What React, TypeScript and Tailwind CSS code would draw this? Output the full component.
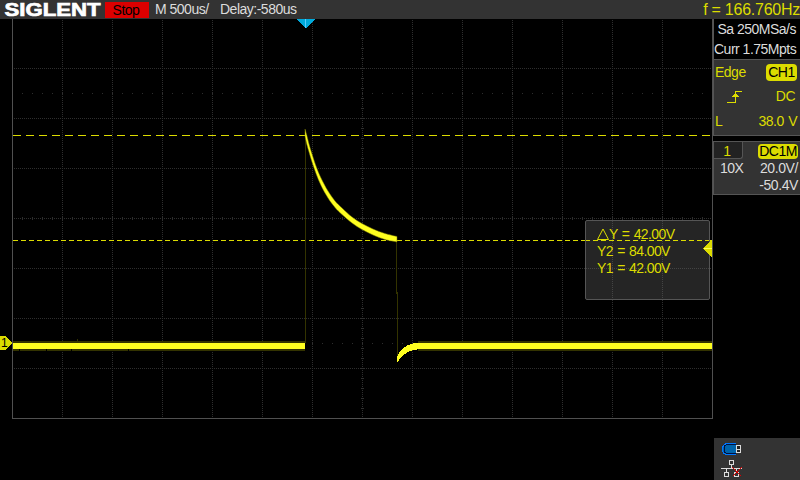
import React from "react";

const FONT = "font-['Liberation_Sans',Arial,sans-serif]";

const range = (n: number) => Array.from({ length: n }, (_, i) => i);

type Edge = [number, number, number];

// x, top and bottom edge of the bright decay trace
const decay: Edge[] = [
  [305, 129, 136], [307, 136, 145], [309, 144, 152], [312, 154, 162], [316, 166, 173.5],
  [321, 178, 185.5], [328, 191, 198], [335, 201, 207.5], [342, 208, 214.5], [352, 217, 223],
  [362, 223.5, 229.5], [373, 229, 235], [385, 233.5, 239.5], [397, 236.5, 242],
];
const recovery: Edge[] = [
  [397, 357, 363], [399, 353, 360], [401, 350.5, 357], [404, 347.5, 354.5], [408, 345, 352],
  [413, 343.5, 350], [420, 343, 349], [712, 343, 349],
];

// Catmull-Rom spline through the points
const curve = (p: [number, number][]) =>
  p.slice(1).map(([x, y], i) => {
    const a = p[i];
    const before = p[i - 1] ?? a;
    const after = p[i + 2] ?? [x, y];
    return `C${a[0] + (x - before[0]) / 6},${a[1] + (y - before[1]) / 6} ${x - (after[0] - a[0]) / 6},${y - (after[1] - a[1]) / 6} ${x},${y}`;
  }).join("");

const smoothBand = (pts: Edge[]) => {
  const top = pts.map(([x, t]): [number, number] => [x, t]);
  const bottom = pts.map(([x, , b]): [number, number] => [x, b]).reverse();
  return `M${top[0].join()}${curve(top)}L${bottom[0].join()}${curve(bottom)}Z`;
};

const band = (pts: Edge[]) =>
  [...pts.map(([x, t]) => `${x},${t}`), ...pts.slice().reverse().map(([x, , b]) => `${x},${b}`)].join(" ");

function Plot() {
  return (
    <svg className="block h-[461px] w-[713px] shrink-0" viewBox="0 19 713 461" shapeRendering="crispEdges">
      <g stroke="#2e2e2e" strokeDasharray="1 1">
        {range(13).map((i) => (
          <line key={i} x1={62.5 + 50 * i} x2={62.5 + 50 * i} y1="20" y2="418" />
        ))}
        {range(7).map((i) => (
          <line key={i} x1="14" x2="712" y1={68.5 + 50 * i} y2={68.5 + 50 * i} />
        ))}
      </g>
      <g fill="#2e2e2e">
        {range(69).map((i) => (
          <g key={i}>
            <rect x={22 + 10 * i} y="93" width="1" height="1" />
            <rect x={22 + 10 * i} y="343" width="1" height="1" />
            <rect x={22 + 10 * i} y="217" width="1" height="3" />
          </g>
        ))}
        {range(39).map((i) => (
          <rect key={i} x="361" y={28 + 10 * i} width="3" height="1" />
        ))}
      </g>
      <path d="M12.5 19V418.5H712.5V19" fill="none" stroke="#505050" />
      <path d="M13 135.5H712" stroke="#dcdc00" strokeDasharray="8 5" />
      <path d="M13 240.5H712" stroke="#dcdc00" strokeDasharray="5 3" />
      <path d="M305.5 130V343M396.5 240V294M397.5 292V360" stroke="#333300" fill="none" />
      <path d="M13 341H305V351H13ZM418 341H712V351H418Z" fill="#333300" />
      <path d={smoothBand(decay)} fill="#ffff20" stroke="#777700" strokeWidth="0.5" shapeRendering="auto" />
      <polygon points={band(recovery)} fill="#ffff20" />
      <rect x="13" y="343" width="292" height="6" fill="#ffff20" />
      <path d="M77 339h1v2h-1z" fill="#333300" />
      <path d="M19 349h1v2h-1zM46 349h1v2h-1zM71 349h1v2h-1zM128 349h1v2h-1z" fill="#000" />
      <path d="M296 19H315L306 28H305Z" fill="#00aadc" />
      <path d="M305.5 19V28" stroke="#55ccff" />
    </svg>
  );
}

function ChannelMarker() {
  return (
    <div className="absolute left-0 top-[336px] h-[14px] w-3">
      <svg className="absolute inset-0" width="12" height="14" shapeRendering="crispEdges">
        <path d="M0 0H6L12 7L6 14H0Z" fill="#dcdc00" />
      </svg>
      <span className="absolute left-px top-0 text-[12px] leading-[14px] text-black">1</span>
    </div>
  );
}

function CursorReadout() {
  return (
    <div className="absolute left-[585px] top-[220px] h-[80px] w-[125px] rounded-[2px] border border-[#555] bg-[#252525]">
      <svg className="absolute inset-0" width="123" height="78" shapeRendering="crispEdges">
        <g stroke="#444" strokeDasharray="1 1">
          <path d="M26.5 0V78M76.5 0V78M0 47.5H123" />
        </g>
        <path d="M-1 19.5H123" stroke="#dcdc00" strokeDasharray="5 3" />
      </svg>
      <div className="relative pl-[11px] pt-[5px] text-[14px] leading-[17px] tracking-[-0.6px] [word-spacing:1px] text-[#dcdc00]">
        <div className="flex items-center">
          <svg width="12" height="17" className="shrink-0">
            <path d="M0.5 13.5H11.5L6 3Z" fill="none" stroke="#dcdc00" />
          </svg>
          Y = 42.00V
        </div>
        <div>Y2 = 84.00V</div>
        <div>Y1 = 42.00V</div>
      </div>
    </div>
  );
}

function Sidebar() {
  return (
    <aside className="flex w-[87px] flex-col text-[14px] tracking-[-0.5px] text-[#dcdcdc]">
      <div className="h-[40px] border-l border-[#555] pr-1 text-right leading-[20px]">
        <div>Sa 250MSa/s</div>
        <div className="whitespace-nowrap">Curr 1.75Mpts</div>
      </div>
      <section className="h-[77px] border-y border-l border-[#555] bg-[#333] pl-px pr-[3px] text-[#dcdc00]">
        <div className="flex h-[24px] items-center justify-between">
          <span>Edge</span>
          <span className="h-[17px] w-[31px] rounded-[4px] bg-[#dcdc00] text-center leading-[17px] text-black">CH1</span>
        </div>
        <div className="flex h-[25px] items-center justify-between pl-[12px] pr-[2px]">
          <svg width="16" height="14" shapeRendering="crispEdges">
            <path d="M0 12.5H8.5V1.5H15" fill="none" stroke="#dcdc00" />
            <path d="M4 7H13L8.5 3Z" fill="#dcdc00" />
          </svg>
          <span>DC</span>
        </div>
        <div className="flex h-[25px] items-center justify-between">
          <span>L</span>
          <span className="[word-spacing:1px]">38.0 V</span>
        </div>
      </section>
      <section className="mt-[5px] h-[54px] border-b border-l border-[#555] bg-[#333]">
        <div className="flex h-[19px] justify-between border-t border-[#555]">
          <span className="h-[17px] w-[29px] rounded-br-[3px] border-b border-r border-[#555] bg-[#222] pr-[2px] text-center leading-[19px] text-[#dcdc00]">1</span>
          <span className="mr-[2px] mt-[2px] h-[15px] w-[40px] rounded-[4px] bg-[#dcdc00] text-center leading-[15px] text-black">DC1M</span>
        </div>
        <div className="flex justify-between pl-[6px] pr-[2px] leading-[17px]">
          <span>10X</span>
          <span className="text-right tracking-[-0.4px]">20.0V/<br />-50.4V</span>
        </div>
      </section>
      <footer className="ml-px mt-auto flex h-[42px] flex-col bg-[#333]">
        <svg width="86" height="42" shapeRendering="crispEdges">
          <path d="M22 6H11L8.5 8.5V13.5L11 16H22Z" fill="#0064aa" />
          <path d="M22 5.5H12L9.5 7.5 8.5 9.5V13L10 15.5 12 16.5H22" fill="none" stroke="#0078ff" />
          <path d="M22 6.5H12.5L10.5 8V14L12.5 15.5H22" fill="none" stroke="#001040" />
          <path d="M22.5 7.5H26.5V14.5H22.5ZM22 11H27" fill="#222" stroke="#dcdcdc" />
          <g fill="none" stroke="#dcdcdc">
            <path d="M15.5 22.5H19.5V26.5H15.5ZM17.5 27V30M7 30.5H28M12.5 30V34M22.5 30V34" />
            <path d="M10.5 34.5H14.5V38.5H10.5ZM20.5 34.5H24.5V38.5H20.5Z" />
          </g>
          <path d="M18.5 29.5L27.5 38.5M27.5 29.5L18.5 38.5" stroke="#dc0000" />
        </svg>
      </footer>
    </aside>
  );
}

export default function App() {
  return (
    <div className={`relative h-[480px] w-[800px] overflow-hidden bg-black ${FONT}`}>
      <header className="flex h-[19px] items-center bg-[#333] text-[14px] leading-[19px] tracking-[-0.5px] text-[#dcdcdc]">
        <svg width="105" height="19" className="shrink-0">
          <text x="4.5" y="16" textLength="96" lengthAdjust="spacingAndGlyphs" fontSize="18.5" fontWeight="700" letterSpacing="0" fill="#fff" stroke="#fff" strokeWidth="0.7">SIGLENT</text>
        </svg>
        <div className="h-4 w-[44px] bg-[#dc0000] pr-0.5 text-center leading-[17px] text-black">Stop</div>
        <span className="ml-[6px] w-[65px]">M 500us/</span>
        <span>Delay:-580us</span>
        <span className="ml-auto whitespace-nowrap text-[16px] tracking-[-0.25px] text-[#dcdc00]">f = 166.760Hz</span>
      </header>
      <main className="flex">
        <Plot />
        <Sidebar />
      </main>
      <ChannelMarker />
      <CursorReadout />
      <svg className="absolute left-[703px] top-[240px]" width="9" height="17" shapeRendering="crispEdges">
        <path d="M9 0V17L0 8.5Z" fill="#dcdc00" />
        <path d="M1 8.5H9" stroke="#ffff55" />
      </svg>
    </div>
  );
}
